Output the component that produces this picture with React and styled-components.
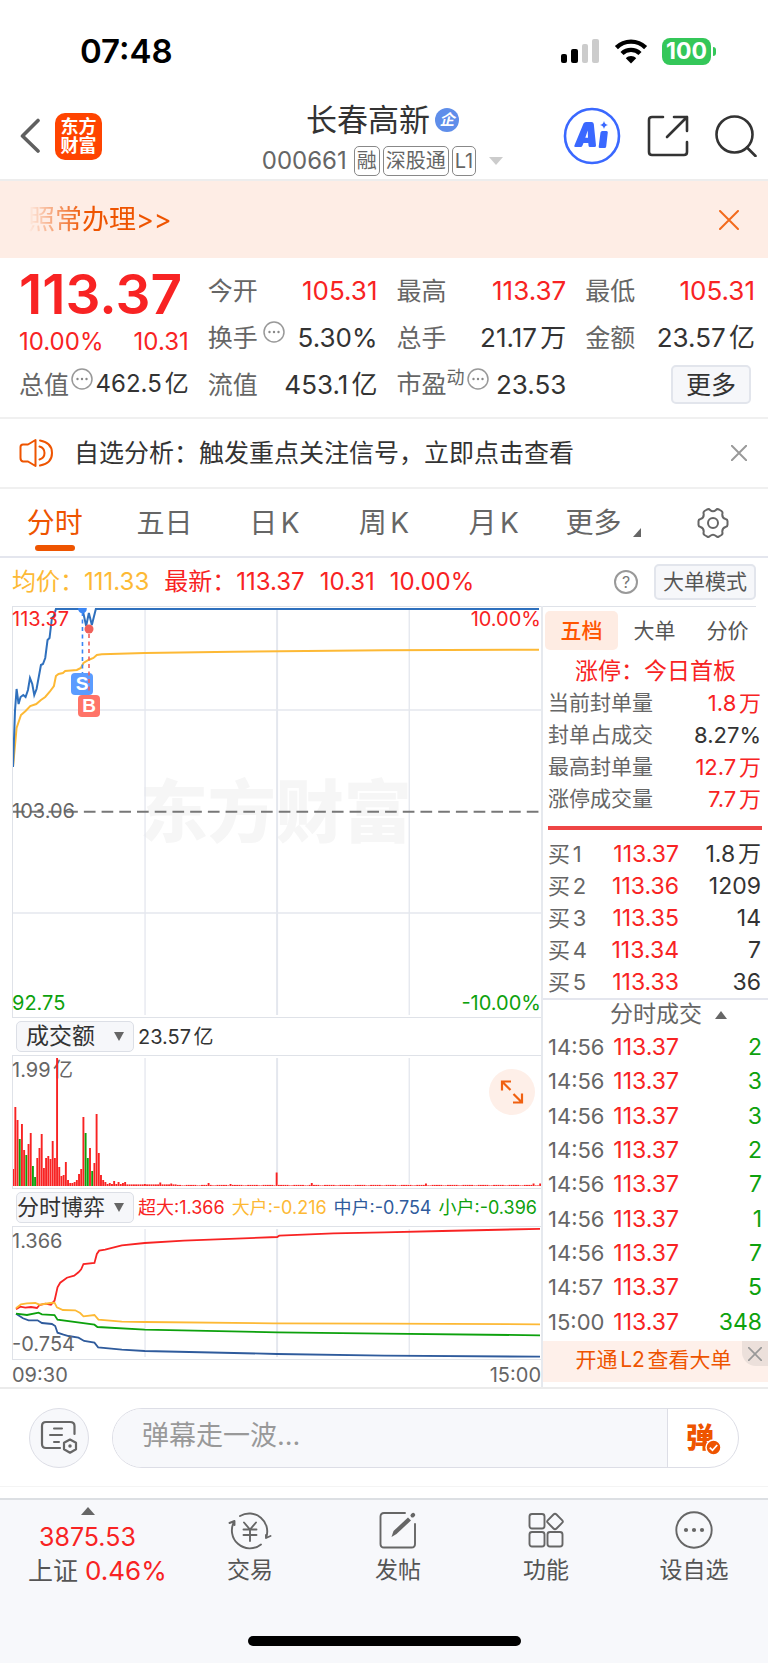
import React, { useState } from 'react'
import styled, { createGlobalStyle } from 'styled-components'

const RED = '#f82323'
const GREEN = '#0da10d'
const ORANGE = '#ee5400'
const YELLOW = '#fdb935'
const BLUE = '#2f5b9c'

const stats = [
  [
    { label: '今开', value: '105.31', up: true },
    { label: '换手', value: '5.30%', info: true },
    { label: '流值', value: '453.1亿' },
  ],
  [
    { label: '最高', value: '113.37', up: true },
    { label: '总手', value: '21.17万' },
    { label: '市盈', value: '23.53', info: true, sup: '动' },
  ],
  [
    { label: '最低', value: '105.31', up: true },
    { label: '金额', value: '23.57亿' },
  ],
]

const limits = [
  { label: '当前封单量', value: '1.8万', up: true },
  { label: '封单占成交', value: '8.27%' },
  { label: '最高封单量', value: '12.7万', up: true },
  { label: '涨停成交量', value: '7.7万', up: true },
]

const bids = [
  ['买1', '113.37', '1.8万'],
  ['买2', '113.36', '1209'],
  ['买3', '113.35', '14'],
  ['买4', '113.34', '7'],
  ['买5', '113.33', '36'],
]

const trades = [
  ['14:56', '113.37', '2'],
  ['14:56', '113.37', '3'],
  ['14:56', '113.37', '3'],
  ['14:56', '113.37', '2'],
  ['14:56', '113.37', '7'],
  ['14:56', '113.37', '1'],
  ['14:56', '113.37', '7'],
  ['14:57', '113.37', '5'],
  ['15:00', '113.37', '348'],
]

const pricePoints = '0,160 2,104 3.6,82 5.6,97 7.6,90 10.3,88 12.6,90 15,83 17,71 19.3,77 21.3,88 23.6,82 28,58 30,57 32.3,51 34.6,33 36.6,31 39,11 41,9 43,2 69.6,2 73.3,19 76,6 79,18 83,2 527,2'
const averagePoints = '0,160 3.6,121 8,108 12.6,104 17.3,99 23.3,97 28,93 32.3,90 36.6,85 41,79 43,69 45.6,67 50,66 52.3,64 64,63 68,61 70.6,56 75.6,53 80.6,51 84,48 89,47.3 132,46 221,44.7 372,43.3 527,42.7'

const flows = [
  { name: '中户', color: BLUE, value: '-0.754', points: '3,86.7 10,91.3 15.6,93.3 24.6,93.3 29,96 39,97 42.3,99 44.6,105.7 50.6,107.7 55.6,109 65.6,110.7 71.3,114 81.6,115.7 85.3,120.3 109,122.7 132,124 264.7,127 372,128.7 528,129.7' },
  { name: '小户', color: GREEN, value: '-0.396', points: '3,86.7 14,88 25.6,85.7 29,87.3 41.6,88 44.6,92.7 81.6,97.7 84.6,100 132,102.7 264.7,105.3 372,106.7 528,108.3' },
  { name: '超大', color: RED, value: '1.366', points: '3,82.3 7.3,79.7 12.3,80.7 18,80 24,81 26.6,78 32.3,76.7 38,77.7 41.6,73.7 43.3,66.3 44.6,60.3 47.3,55.7 54,50.7 61.3,48.7 65.6,45.3 68.3,42.3 70.6,37 81.6,36 84,27 86.3,23.7 92.3,22.7 109,18.3 132,16 171.3,13.7 264.7,10 266.7,8.7 321,6.3 372,5.3 430,4 528,1.8' },
  { name: '大户', color: YELLOW, value: '-0.216', points: '3,81.3 8,77.3 14,76.3 22.3,76 26.6,77.7 37.3,76 41.6,75.7 44,80.3 50,83 62.3,83.3 67.3,86 70.6,89.3 81.6,88 85.6,92.7 109,94.7 132,95 261,96.3 372,96.7 528,97.3' },
]
const legend = [flows[2], flows[3], flows[0], flows[1]]

const openingVolumes = [17, 79, 66, 47, 62, 36, 31, 42, 53, 20, 9, 28, 38, 52, 18, 28, 30, 27, 45, 28, 128, 19, 10, 11, 24, 6, 3, 3, 4, 6, 12, 17, 69, 53, 28, 38, 15, 23, 72, 33, 11, 6, 4, 2, 3, 2, 5, 2, 4, 2, 3, 4]
const sellMinutes = [3, 6, 9, 10, 33, 34, 36]
const laterVolumes = { 60: 2, 67: 3.5, 72: 2.5, 89: 3, 99: 2, 120: 13.5, 136: 3, 188: 2.5, 237: 2.5, 240: 2.5 }
const volumes = Array.from({ length: 241 }, (_, i) => openingVolumes[i] || laterVolumes[i] || (i < 75 ? 1.6 : i % 7 < 2 ? 0.6 : 1.1))

const Dots = ({ size = 22 }) => (
  <svg width={size} height={size} viewBox='0 0 22 22' fill='none'>
    <circle cx='11' cy='11' r='10' stroke='#999' strokeWidth='1.5' />
    <circle cx='6.5' cy='11' r='1.2' fill='#888' />
    <circle cx='11' cy='11' r='1.2' fill='#888' />
    <circle cx='15.5' cy='11' r='1.2' fill='#888' />
  </svg>
)

const Cross = ({ size, color, width = 2 }) => (
  <svg width={size} height={size} viewBox='0 0 20 20' stroke={color} strokeWidth={width} strokeLinecap='round'>
    <path d='M1 1 19 19M19 1 1 19' />
  </svg>
)

const Grid = ({ height, rows = [] }) => (
  <g stroke='#e4e7ee' strokeWidth='1.3'>
    <path d={`M132.3 2V${height - 2}M397 2V${height - 2}`} />
    <path d={`M264.6 2V${height - 2}`} strokeWidth='2' />
    {rows.map(y => <path key={y} d={`M0 ${y}H529`} strokeWidth='1.6' />)}
  </g>
)

const Stat = ({ label, value, up, info, sup, small }) => (
  <StatRow>
    <StatLabel>{label}{sup && <sup>{sup}</sup>}</StatLabel>
    {info && <InfoButton aria-label={label + '说明'} $tight={!!sup || small}><Dots /></InfoButton>}
    <StatValue $up={up} $small={small}>{value}</StatValue>
  </StatRow>
)

const StatusBar = () => (
  <Status>
    <Clock>07:48</Clock>
    <StatusIcons>
      <svg width='40' height='26' viewBox='0 0 40 26'>
        <rect x='1' y='15' width='6' height='9' rx='2' />
        <rect x='11' y='10' width='7' height='14' rx='2' />
        <rect x='22' y='5' width='6' height='19' rx='2' fill='#ccc' />
        <rect x='32' y='0' width='7' height='24' rx='2' fill='#ccc' />
      </svg>
      <svg width='34' height='26' viewBox='0 0 34 26' fill='none' stroke='#000' strokeWidth='4.4'>
        <path d='M2.4 8.6C10.5 .6 23.5 .6 31.6 8.6' />
        <path d='M8 14.5C13 9.7 21 9.7 26 14.5' />
        <path d='M17 24.5 11.8 19.3C14.5 16.3 19.5 16.3 22.2 19.3Z' fill='#000' stroke='none' />
      </svg>
      <Battery>100</Battery>
    </StatusIcons>
  </Status>
)

const TopHeader = () => (
  <Header>
    <HeaderSide>
      <IconButton aria-label='返回'>
        <svg width='20' height='36' viewBox='0 0 20 36' fill='none' stroke='#606060' strokeWidth='3.6' strokeLinecap='round' strokeLinejoin='round'>
          <path d='M18 2.5 2.5 18 18 33' />
        </svg>
      </IconButton>
      <Logo>东方<br />财富</Logo>
    </HeaderSide>
    <Title>
      <h1>长春高新<Badge>企</Badge></h1>
      <CodeRow>
        <Code>000661</Code>
        <Tag>融</Tag>
        <Tag>深股通</Tag>
        <Tag>L1</Tag>
        <svg width='14' height='8' viewBox='0 0 14 8' fill='#ccc'><path d='M0 0H14L7 8Z' /></svg>
      </CodeRow>
    </Title>
    <HeaderSide $end>
      <IconButton aria-label='AI'>
        <svg width='58' height='58' viewBox='0 0 58 58' fill='#3a68ff'>
          <circle cx='29' cy='29' r='27' fill='none' stroke='#3a68ff' strokeWidth='2.6' />
          <path d='M20.5 16.5Q21.2 15 23 15H28.5Q30.5 15 30.8 17L33 38.5Q33 40 31.5 40H27Q25.6 40 25.5 38.5L25.3 36H20.5L19.5 38.5Q18.9 40 17.5 40H12.5Q10.8 40 11.4 38.5ZM22.3 30.7H25L24.7 23.5Z' fillRule='evenodd' />
          <path d='M37.5 25.5Q37.8 24 39.3 24H43.5Q45 24 44.8 25.5L43.2 39.5Q43 41 41.5 41H37Q35.5 41 35.7 39.5ZM41 14Q41.7 17.3 45 18Q41.7 18.7 41 22Q40.3 18.7 37 18Q40.3 17.3 41 14Z' />
        </svg>
      </IconButton>
      <IconButton aria-label='分享'>
        <svg width='42' height='42' viewBox='0 0 42 42' fill='none' stroke='#333' strokeWidth='2.6' strokeLinecap='round' strokeLinejoin='round'>
          <path d='M16 2H5Q2 2 2 5V37Q2 40 5 40H37Q40 40 40 37V27M27 2H40V16M40 2 20 22' />
        </svg>
      </IconButton>
      <IconButton aria-label='搜索'>
        <svg width='42' height='42' viewBox='0 0 42 42' fill='none' stroke='#333' strokeWidth='2.6' strokeLinecap='round'>
          <circle cx='19.5' cy='19.5' r='18' />
          <path d='M32 32.5 40.5 41' />
        </svg>
      </IconButton>
    </HeaderSide>
  </Header>
)

const QuotePanel = () => (
  <Quote>
    <QuoteMain>
      <Price>113.37</Price>
      <Change><span>10.00%</span><span>10.31</span></Change>
      <Stat label='总值' value='462.5亿' info small />
    </QuoteMain>
    {stats.map((column, i) => (
      <StatColumn key={i}>
        {column.map(item => <Stat key={item.label} {...item} />)}
        {i === 2 && <MoreRow><MoreButton>更多</MoreButton></MoreRow>}
      </StatColumn>
    ))}
  </Quote>
)

const PeriodTabs = () => {
  const [active, setActive] = useState('分时')

  return (
    <Periods>
      {['分时', '五日', '日K', '周K', '月K'].map(name => (
        <Period key={name} $active={active === name} onClick={() => setActive(name)}><span>{name}</span></Period>
      ))}
      <Period>
        <span>更多</span>
        <svg width='8' height='9' viewBox='0 0 8 9' fill='#666'><path d='M8 0V9H0Z' /></svg>
      </Period>
      <Period aria-label='设置'>
        <svg width='32' height='32' viewBox='0 0 32 32' fill='none' stroke='#666' strokeWidth='2' strokeLinejoin='round'>
          <path d='M10 2.5Q12 1.5 13 3Q16 5.5 19 3Q20 1.5 22 2.5L24.5 4Q26 5 25.3 7Q25 11 28.5 12Q30.5 12.5 30.5 14V18Q30.5 19.5 28.5 20Q25 21 25.3 25Q26 27 24.5 28L22 29.5Q20 30.5 19 29Q16 26.5 13 29Q12 30.5 10 29.5L7.5 28Q6 27 6.7 25Q7 21 3.5 20Q1.5 19.5 1.5 18V14Q1.5 12.5 3.5 12Q7 11 6.7 7Q6 5 7.5 4Z' />
          <circle cx='16' cy='16' r='5' />
        </svg>
      </Period>
    </Periods>
  )
}

const PriceChart = () => (
  <ChartArea>
    <Watermark>东方财富</Watermark>
    <ChartSvg height='410' viewBox='0 0 529 410' preserveAspectRatio='none'>
      <Grid height={410} rows={[103, 306]} />
      <path d='M0 204.7H529' stroke='#777' strokeWidth='2' strokeDasharray='11.7 6.05' />
      <polyline points={averagePoints} stroke={YELLOW} strokeWidth='2' />
      <polyline points={pricePoints} stroke='#2f70bd' strokeWidth='2' />
      <path d='M69.6 5V66' stroke='#3a86f5' strokeWidth='1.6' strokeDasharray='4 3.5' />
      <path d='M65.3 1H73.9V2A4.3 4.3 0 0 1 65.3 2Z' fill='#3a86f5' />
    </ChartSvg>
    <Label $color={RED} $top={2}>113.37</Label>
    <Label $color={RED} $top={2} $right>10.00%</Label>
    <Label $color='#666' $top={194}>103.06</Label>
    <Label $color={GREEN} $top={386}>92.75</Label>
    <Label $color={GREEN} $top={386} $right>-10.00%</Label>
    <Marker $color='#5b9cff' $x={58} $y={66}>S</Marker>
    <Marker $color='#ff7468' $x={65} $y={88}>B</Marker>
    <BuyLine width='10' height='70' viewBox='0 0 10 70'>
      <circle cx='5' cy='5' r='4.5' fill='#f0605a' />
      <path d='M5 10V69' stroke='#f0605a' strokeWidth='1.6' strokeDasharray='4 3.5' />
    </BuyLine>
  </ChartArea>
)

const VolumeChart = () => (
  <ChartArea>
    <Label $color='#666' $top={4}>1.99亿</Label>
    <ChartSvg height='132' viewBox='0 0 529 132' preserveAspectRatio='none'>
      <Grid height={130} />
      {volumes.map((v, i) => (
        <rect key={i} x={i * 2.2 - 0.8} y={130 - v} width='1.9' height={v} fill={sellMinutes.includes(i) ? GREEN : RED} />
      ))}
    </ChartSvg>
    <ExpandButton aria-label='全屏'>
      <svg width='24' height='24' viewBox='0 0 24 24' fill='none' stroke='#f06010' strokeWidth='2.2'>
        <path d='M11 1.5H2V10.5M2 1.5 10.5 10M13 22.5H22V13.5M22 22.5 13.5 14' />
      </svg>
    </ExpandButton>
  </ChartArea>
)

const FlowChart = () => (
  <ChartArea>
    <ChartSvg height='132' viewBox='0 0 529 132' preserveAspectRatio='none'>
      <Grid height={132} />
      {flows.map(flow => <polyline key={flow.name} points={flow.points} stroke={flow.color} strokeWidth='1.8' />)}
    </ChartSvg>
    <Label $color='#666' $top={4}>1.366</Label>
    <Label $color='#666' $top={107}>-0.754</Label>
  </ChartArea>
)

const Indicator = ({ name, label, wide, children }) => (
  <IndicatorRow>
    <SelectWrap>
      <Select aria-label={label} defaultValue={name} $wide={wide}>
        <option>{name}</option>
      </Select>
      <svg width='10' height='9' viewBox='0 0 10 9' fill='#666'><path d='M0 0H10L5 9Z' /></svg>
    </SelectWrap>
    {children}
  </IndicatorRow>
)

const OrderBook = () => {
  const [tab, setTab] = useState('五档')

  return (
    <Side>
      <SideTabs>
        {['五档', '大单', '分价'].map(name => (
          <SideTab key={name} $active={tab === name} onClick={() => setTab(name)}>{name}</SideTab>
        ))}
      </SideTabs>
      <LimitTitle>涨停：今日首板</LimitTitle>
      <LimitTable>
        <tbody>
          {limits.map(row => (
            <tr key={row.label}>
              <th>{row.label}</th>
              <Cell $color={row.up && RED}>{row.value}</Cell>
            </tr>
          ))}
        </tbody>
      </LimitTable>
      <Divider />
      <TickTable>
        <tbody>
          {bids.map(([level, price, count]) => (
            <tr key={level}>
              <th>{level}</th>
              <PriceCell>{price}</PriceCell>
              <Cell>{count}</Cell>
            </tr>
          ))}
        </tbody>
      </TickTable>
      <TradesTitle>
        分时成交
        <svg width='12' height='8' viewBox='0 0 12 8' fill='#666'><path d='M0 8H12L6 0Z' /></svg>
      </TradesTitle>
      <TradeTable>
        <tbody>
          {trades.map(([time, price, count], i) => (
            <tr key={i}>
              <th>{time}</th>
              <PriceCell>{price}</PriceCell>
              <Cell $color={GREEN}>{count}</Cell>
            </tr>
          ))}
        </tbody>
      </TradeTable>
      <LevelTwo>
        <a href='#l2'>开通L2查看大单</a>
        <LevelTwoClose aria-label='关闭'><Cross size={14} color='#999' width={2.4} /></LevelTwoClose>
      </LevelTwo>
    </Side>
  )
}

const Composer = () => (
  <ComposerBar>
    <RoundButton aria-label='弹幕设置'>
      <svg width='38' height='36' viewBox='0 0 38 36' fill='none' stroke='#666' strokeWidth='2.2' strokeLinecap='round'>
        <path d='M20 28H6Q2 28 2 24V6Q2 2 6 2H30Q34.5 2 34.5 6V14' />
        <path d='M14 8.5H22M10 15H22M14 22H19' strokeWidth='2' />
        <path d='M30 19.5 36 22.7V29.3L30 32.7 24 29.3V22.7Z' strokeLinejoin='round' />
        <circle cx='30' cy='26' r='1' fill='#666' strokeWidth='1.5' />
      </svg>
    </RoundButton>
    <InputPill>
      <MessageInput aria-label='弹幕' placeholder='弹幕走一波...' />
      <SendButton aria-label='弹幕开关'>
        弹
        <svg width='17' height='17' viewBox='0 0 17 17' fill='none'>
          <circle cx='8.5' cy='8.5' r='7.5' fill={ORANGE} stroke='#fff' strokeWidth='1.5' />
          <path d='M4.8 8.6 7.5 11.3 12.2 6' stroke='#fff' strokeWidth='1.8' />
        </svg>
      </SendButton>
    </InputPill>
  </ComposerBar>
)

const BottomBar = () => (
  <Bottom>
    <Nav>
      <IndexButton>
        <svg width='14' height='8' viewBox='0 0 14 8' fill='#666'><path d='M0 8H14L7 0Z' /></svg>
        <IndexValue>3875.53</IndexValue>
        <span>上证 <b>0.46%</b></span>
      </IndexButton>
      <NavItem>
        <svg width='44' height='40' viewBox='0 0 44 40' fill='none' stroke='#666' strokeWidth='1.9' strokeLinecap='round' strokeLinejoin='round'>
          <path d='M12 6A18 18 0 0 1 38 28L42.5 26M38 28V25' />
          <path d='M33 34.5A18 18 0 0 1 6.5 11V15M6.5 11 1.5 13' />
          <path d='M16 12.5 22 19.5 28 12.5M15.5 19.5H28.5M15.5 25H28.5M22 19.5V31' />
        </svg>
        交易
      </NavItem>
      <NavItem>
        <svg width='40' height='40' viewBox='0 0 40 40' fill='none' stroke='#666' strokeWidth='1.9' strokeLinecap='round'>
          <path d='M27 3H6Q2.5 3 2.5 6.5V34Q2.5 37.5 6 37.5H33.5Q37 37.5 37 34V14' />
          <path d='M13.5 27 15.5 21 30 7.5 33 10.5 18.5 24Z' fill='#666' stroke='none' />
          <path d='M34.5 5.5 35.2 4.8' strokeWidth='4' />
        </svg>
        发帖
      </NavItem>
      <NavItem>
        <svg width='36' height='40' viewBox='0 0 36 40' fill='none' stroke='#666' strokeWidth='1.9' strokeLinejoin='round'>
          <rect x='1.5' y='4' width='15' height='14.5' rx='2.5' />
          <rect x='1.5' y='22' width='15' height='14.5' rx='2.5' />
          <rect x='19.5' y='22' width='15' height='14.5' rx='2.5' />
          <path d='M25.5 4.5Q27 3 28.5 4.5L34.3 10.3Q35.5 11.5 34.3 12.7L28.5 18.5Q27 20 25.5 18.5L19.7 12.7Q18.5 11.5 19.7 10.3Z' />
        </svg>
        功能
      </NavItem>
      <NavItem>
        <svg width='40' height='40' viewBox='0 0 40 40' fill='#666'>
          <circle cx='20' cy='20' r='17.7' fill='none' stroke='#666' strokeWidth='1.9' />
          <circle cx='12' cy='20' r='2.1' />
          <circle cx='20' cy='20' r='2.1' />
          <circle cx='28' cy='20' r='2.1' />
        </svg>
        设自选
      </NavItem>
    </Nav>
    <HomeIndicator />
  </Bottom>
)

const App = () => (
  <Page>
    <GlobalStyle />
    <StatusBar />
    <TopHeader />
    <Banner>
      <BannerText href='#notice'>照常办理&gt;&gt;</BannerText>
      <IconButton aria-label='关闭公告'><Cross size={20} color='#f36a1c' /></IconButton>
    </Banner>
    <QuotePanel />
    <News>
      <svg width='35' height='30' viewBox='0 0 35 30' fill='none' stroke={ORANGE} strokeWidth='2' strokeLinejoin='round' strokeLinecap='round'>
        <path d='M16.5 2V28L9 23.5H4Q1.5 23 1.5 20V9Q1.5 6.5 4 6.5H9Z' />
        <path d='M20.5 8.5Q25.5 10 25.5 15T20.5 21.5M21 2.5Q33 4.5 33 15T21 27.5' />
      </svg>
      <NewsLink href='#analysis'>自选分析：触发重点关注信号，立即点击查看</NewsLink>
      <IconButton aria-label='关闭提醒'><Cross size={16} color='#999' width={2.4} /></IconButton>
    </News>
    <PeriodTabs />
    <Summary>
      <SummaryText $color={YELLOW}>均价：111.33</SummaryText>
      <SummaryText $color={RED}>最新：113.37</SummaryText>
      <SummaryText $color={RED}>10.31</SummaryText>
      <SummaryText $color={RED}>10.00%</SummaryText>
      <HelpButton aria-label='帮助'>?</HelpButton>
      <ModeButton>大单模式</ModeButton>
    </Summary>
    <Board>
      <Charts>
        <PriceChart />
        <Indicator name='成交额' label='副图指标一'>
          <IndicatorValue>23.57亿</IndicatorValue>
        </Indicator>
        <VolumeChart />
        <Indicator name='分时博弈' label='副图指标二' wide>
          <Legend>
            {legend.map(item => <LegendItem key={item.name} $color={item.color}>{item.name}:{item.value}</LegendItem>)}
          </Legend>
        </Indicator>
        <FlowChart />
        <TimeAxis><span>09:30</span><span>15:00</span></TimeAxis>
      </Charts>
      <OrderBook />
    </Board>
    <Composer />
    <BottomBar />
  </Page>
)

export default App

const GlobalStyle = createGlobalStyle`
* {
  box-sizing: border-box;
}

body {
  margin: 0;
  background: #fff;
  color: #333;
  font-family: Inter, 'Noto Sans CJK SC', sans-serif;
  text-autospace: normal;
}

button, input, select {
  font-family: inherit;
  margin: 0;
}

button {
  padding: 0;
  border: none;
  background: none;
  color: inherit;
  cursor: pointer;
}

a {
  color: inherit;
  text-decoration: none;
}

svg {
  display: block;
  flex: none;
}
`

const Page = styled.div`
line-height: 1.2;
`

const Status = styled.div`
height: 102px;
padding: 1px 57px 0 80px;
display: flex;
align-items: center;
justify-content: space-between;
`

const Clock = styled.div`
font-size: 33px;
font-weight: 600;
color: #000;
`

const StatusIcons = styled.div`
display: flex;
align-items: center;
gap: 14px;
`

const Battery = styled.div`
position: relative;
width: 49px;
height: 27px;
border-radius: 8px;
background: #34c759;
color: #fff;
font-size: 23px;
line-height: 27px;
font-weight: 700;
text-align: center;

&::after{
  content: '';
  position: absolute;
  right: -5px;
  top: 9px;
  width: 3px;
  height: 9px;
  border-radius: 0 4px 4px 0;
  background: #34c759;
}
`

const Header = styled.header`
height: 79px;
padding: 0 11px 0 8px;
display: grid;
grid-template-columns: 1fr auto 1fr;
align-items: center;
border-bottom: 2px solid #ededed;
`

const HeaderSide = styled.div`
display: flex;
align-items: center;
justify-content: ${props => props.$end ? 'flex-end' : 'flex-start'};
gap: ${props => props.$end ? '26px' : '15px'};
padding: 0 0 9px ${props => props.$end ? '0' : '12px'};
`

const IconButton = styled.button`
display: grid;
place-items: center;
`

const Logo = styled.div`
width: 47px;
height: 47px;
border-radius: 10px;
background: #ff4400;
color: #fff;
font-size: 18px;
line-height: 19px;
font-weight: 700;
text-align: center;
padding-top: 4px;
`

const Title = styled.div`
display: flex;
flex-direction: column;
align-items: center;
gap: 5px;

& > h1{
  margin: 0;
  display: flex;
  align-items: center;
  gap: 5px;
  font-size: 31px;
  line-height: 36px;
  font-weight: 400;
}
`

const Badge = styled.span`
width: 24px;
height: 24px;
border-radius: 50%;
background: #5f8eea;
color: #fff;
font-size: 15px;
line-height: 24px;
font-weight: 700;
font-style: italic;
text-align: center;
`

const CodeRow = styled.div`
height: 36px;
display: flex;
align-items: center;
gap: 3px;
color: #666;

& > svg{
  margin-left: 10px;
}
`

const Code = styled.span`
margin-right: 4px;
font-size: 24px;
`

const Tag = styled.span`
height: 30px;
padding: 0 2px;
border: 1px solid #888;
border-radius: 5px;
font-size: 20px;
line-height: 28px;
`

const Banner = styled.div`
height: 77px;
padding: 0 29px 0 28px;
display: flex;
align-items: center;
justify-content: space-between;
background: #feede5;
`

const BannerText = styled.a`
padding-top: 2px;
font-size: 27px;
color: ${ORANGE};
mask-image: linear-gradient(to right, transparent, #000 56px);
`

const Quote = styled.section`
padding: 9px 13px 9px 19px;
display: grid;
grid-template-columns: repeat(4, 1fr);
gap: 19px;
border-bottom: 2px solid #f0f0f0;
`

const QuoteMain = styled.div`
min-width: 0;
display: flex;
flex-direction: column;
`

const Price = styled.div`
font-size: 55px;
line-height: 54px;
font-weight: 600;
color: ${RED};
`

const Change = styled.div`
height: 40px;
display: flex;
align-items: flex-end;
justify-content: space-between;
font-size: 24px;
line-height: 38px;
color: ${RED};
`

const StatColumn = styled.div`
min-width: 0;
`

const StatRow = styled.div`
height: 47px;
display: flex;
align-items: center;
white-space: nowrap;
`

const StatLabel = styled.span`
font-size: 25px;
line-height: 30px;
color: #666;

& > sup{
  font-size: 18px;
  line-height: 18px;
}
`

const InfoButton = styled.button`
align-self: flex-start;
padding: 7px 0 0 ${props => props.$tight ? '2px' : '5px'};
`

const StatValue = styled.span`
flex: 1;
text-align: right;
font-size: ${props => props.$small ? '24px' : '26px'};
color: ${props => props.$up ? RED : '#333'};
`

const MoreRow = styled.div`
height: 47px;
padding-right: 4px;
display: flex;
align-items: center;
justify-content: flex-end;
`

const MoreButton = styled.button`
width: 80px;
height: 39px;
border: 2px solid #e2e5ec;
border-radius: 5px;
background: #f6f7fa;
font-size: 25px;
line-height: 30px;
`

const News = styled.div`
height: 70px;
padding: 0 21px 0 19px;
display: flex;
align-items: center;
border-bottom: 2px solid #f0f0f0;
`

const NewsLink = styled.a`
flex: 1;
padding-left: 20px;
font-size: 25px;
`

const Periods = styled.nav`
height: 69px;
display: flex;
align-items: center;
border-bottom: 2px solid #e4e6ee;
`

const Period = styled.button`
position: relative;
flex: 1;
display: flex;
align-items: flex-end;
justify-content: center;
font-size: 28px;
line-height: 36px;
color: ${props => props.$active ? ORANGE : '#666'};

& > span + svg{
  margin: 0 0 4px 12px;
}

&::after{
  content: '';
  display: ${props => props.$active ? 'block' : 'none'};
  position: absolute;
  bottom: -10px;
  left: 50%;
  width: 40px;
  height: 6px;
  margin-left: -20px;
  border-radius: 3px;
  background: ${ORANGE};
}
`

const Summary = styled.div`
height: 48px;
padding: 0 12px;
display: flex;
align-items: center;
`

const SummaryText = styled.span`
margin-right: 15px;
font-size: 24px;
color: ${props => props.$color};
white-space: nowrap;
`

const HelpButton = styled.button`
width: 24px;
height: 24px;
margin: 0 16px 0 auto;
border: 2px solid #999;
border-radius: 50%;
font-size: 16px;
line-height: 20px;
color: #777;
`

const ModeButton = styled.button`
width: 102px;
height: 36px;
border: 2px solid #e2e5ec;
border-radius: 5px;
background: #f6f7fa;
font-size: 21px;
line-height: 26px;
color: #555;
`

const Board = styled.main`
margin-left: 12px;
display: grid;
grid-template-columns: minmax(0, 1fr) 227px;
`

const Charts = styled.div`
min-width: 0;
`

const ChartArea = styled.div`
position: relative;
border: 1px solid #dfe2e8;
border-right: none;
`

const ChartSvg = styled.svg`
position: relative;
width: 100%;
fill: none;
`

const Label = styled.span`
position: absolute;
top: ${props => props.$top}px;
${props => props.$right ? 'right: 0;' : 'left: -1px;'}
font-size: 20px;
line-height: 20px;
color: ${props => props.$color};
`

const Watermark = styled.div`
position: absolute;
top: 165px;
left: 24%;
font-size: 68px;
line-height: 80px;
font-weight: 900;
color: #f6f6f6;
`

const Marker = styled.span`
position: absolute;
left: ${props => props.$x}px;
top: ${props => props.$y}px;
width: 22px;
height: 22px;
border-radius: 4px;
background: ${props => props.$color};
color: #fff;
font-family: 'Liberation Sans', sans-serif;
font-size: 19px;
line-height: 22px;
font-weight: 700;
text-align: center;
`

const BuyLine = styled.svg`
position: absolute;
left: 71px;
top: 17px;
`

const ExpandButton = styled.button`
position: absolute;
top: 13px;
right: 6px;
width: 46px;
height: 46px;
border-radius: 50%;
background: #feefe8;
display: grid;
place-items: center;
`

const IndicatorRow = styled.div`
height: 37px;
padding-left: 4px;
display: flex;
align-items: center;
`

const SelectWrap = styled.div`
position: relative;

& > svg{
  position: absolute;
  right: 10px;
  top: 11px;
  pointer-events: none;
}
`

const Select = styled.select`
display: block;
appearance: none;
width: 118px;
height: 31px;
padding: ${props => props.$wide ? '0' : '0 9px'};
border: 1px solid #dcdfe6;
border-radius: 5px;
background: #f6f7fa;
font-size: ${props => props.$wide ? '22px' : '23px'};
line-height: 29px;
color: #333;
`

const IndicatorValue = styled.span`
padding-left: 4px;
font-size: 20px;
`

const Legend = styled.div`
flex: 1;
padding: 0 4px 0 4px;
display: flex;
justify-content: space-between;
`

const LegendItem = styled.span`
font-size: 18px;
color: ${props => props.$color};
white-space: nowrap;
`

const TimeAxis = styled.div`
height: 27px;
padding-top: 3px;
display: flex;
justify-content: space-between;
font-size: 20px;
line-height: 24px;
color: #666;
`

const Side = styled.aside`
border-left: 2px solid #e6e9ee;
display: flex;
flex-direction: column;
`

const SideTabs = styled.div`
height: 45px;
margin-right: 12px;
border-top: 1px solid #dfe2e8;
padding: 4px 0 0 2px;
display: flex;
`

const SideTab = styled.button`
flex: 0 0 73px;
height: 39px;
padding-bottom: 3px;
border-radius: 5px;
background: ${props => props.$active ? '#feece3' : 'none'};
font-size: 21px;
font-weight: ${props => props.$active ? '500' : '400'};
color: ${props => props.$active ? '#ff5500' : '#555'};
`

const LimitTitle = styled.div`
padding-top: 4px;
font-size: 23px;
line-height: 32px;
text-align: center;
color: ${RED};
`

const SideTable = styled.table`
width: 100%;
padding: 0 7px 0 5px;
border-spacing: 0;
table-layout: fixed;
font-size: 23px;
line-height: 32px;

& th, & td{
  padding: 0;
  white-space: nowrap;
}

& th{
  text-align: left;
  font-size: 21px;
  font-weight: 400;
  color: #666;
}
`

const LimitTable = styled(SideTable)`
font-size: 22px;

& th{
  width: 110px;
}
`

const TickTable = styled(SideTable)`
& th{
  width: 58px;
  font-size: 22px;
}
`

const TradeTable = styled(TickTable)`
height: 309px;
padding: 0 6px 0 5px;
`

const Cell = styled.td`
text-align: right;
color: ${props => props.$color || '#333'};
`

const PriceCell = styled.td`
width: 73px;
text-align: right;
color: ${RED};
`

const Divider = styled.div`
height: 4px;
margin: 11px 6px 8px 5px;
background: #ee4545;
`

const TradesTitle = styled.div`
height: 32px;
border-top: 2px solid #e4e6ee;
padding-left: 26px;
display: flex;
align-items: center;
justify-content: center;
gap: 13px;
font-size: 23px;
color: #666;
`

const LevelTwo = styled.div`
position: relative;
margin-top: auto;
margin-bottom: 5px;
height: 41px;
padding-right: 4px;
background: #fef0ea;
font-size: 21px;
line-height: 38px;
text-align: center;
color: ${ORANGE};
`

const LevelTwoClose = styled.button`
position: absolute;
top: 0;
right: 0;
width: 26px;
height: 25px;
border-radius: 0 0 0 14px;
background: #ece0db;
display: grid;
place-items: center;
`

const ComposerBar = styled.div`
height: 100px;
padding: 0 29px;
display: flex;
align-items: center;
gap: 23px;
border-top: 2px solid #ebebeb;
border-bottom: 1px solid #f4f4f4;
`

const RoundButton = styled.button`
width: 60px;
height: 60px;
border: 1px solid #dddee6;
border-radius: 50%;
background: #f7f8fb;
display: grid;
place-items: center;
`

const InputPill = styled.div`
flex: 1;
height: 60px;
border: 1px solid #dddee6;
border-radius: 30px;
display: flex;
overflow: hidden;
`

const MessageInput = styled.input`
flex: 1;
min-width: 0;
border: none;
outline: none;
padding: 0 29px 5px;
background: #f7f8fb;
font-size: 27px;

&::placeholder{
  color: #999;
  opacity: 1;
}
`

const SendButton = styled.button`
position: relative;
width: 71px;
padding: 0 6px 4px 0;
border-left: 1px solid #dddee6;
font-size: 28px;
font-weight: 900;
color: ${ORANGE};

& > svg{
  position: absolute;
  right: 16px;
  bottom: 11px;
}
`

const Bottom = styled.footer`
margin-top: 11px;
padding-bottom: 17px;
border-top: 2px solid #dcdfe3;
background: #f7f8fb;
`

const Nav = styled.nav`
display: flex;
height: 136px;
font-size: 23px;
color: #555;
`

const IndexButton = styled.button`
flex: 0 0 176px;
padding: 7px 0 0 28px;
display: flex;
flex-direction: column;
align-items: flex-start;
font-size: 25px;
line-height: 34px;
white-space: nowrap;

& > svg{
  margin-left: 53px;
}

& b{
  font-size: 26px;
  font-weight: 400;
  color: ${RED};
}
`

const IndexValue = styled.span`
padding: 5px 0 0 11px;
color: ${RED};
`

const NavItem = styled.button`
flex: 1;
padding-top: 10px;
display: flex;
flex-direction: column;
align-items: center;
gap: 5px;
font-size: 23px;
line-height: 30px;
`

const HomeIndicator = styled.div`
width: 273px;
height: 10px;
margin: 0 auto;
border-radius: 5px;
background: #000;
`
